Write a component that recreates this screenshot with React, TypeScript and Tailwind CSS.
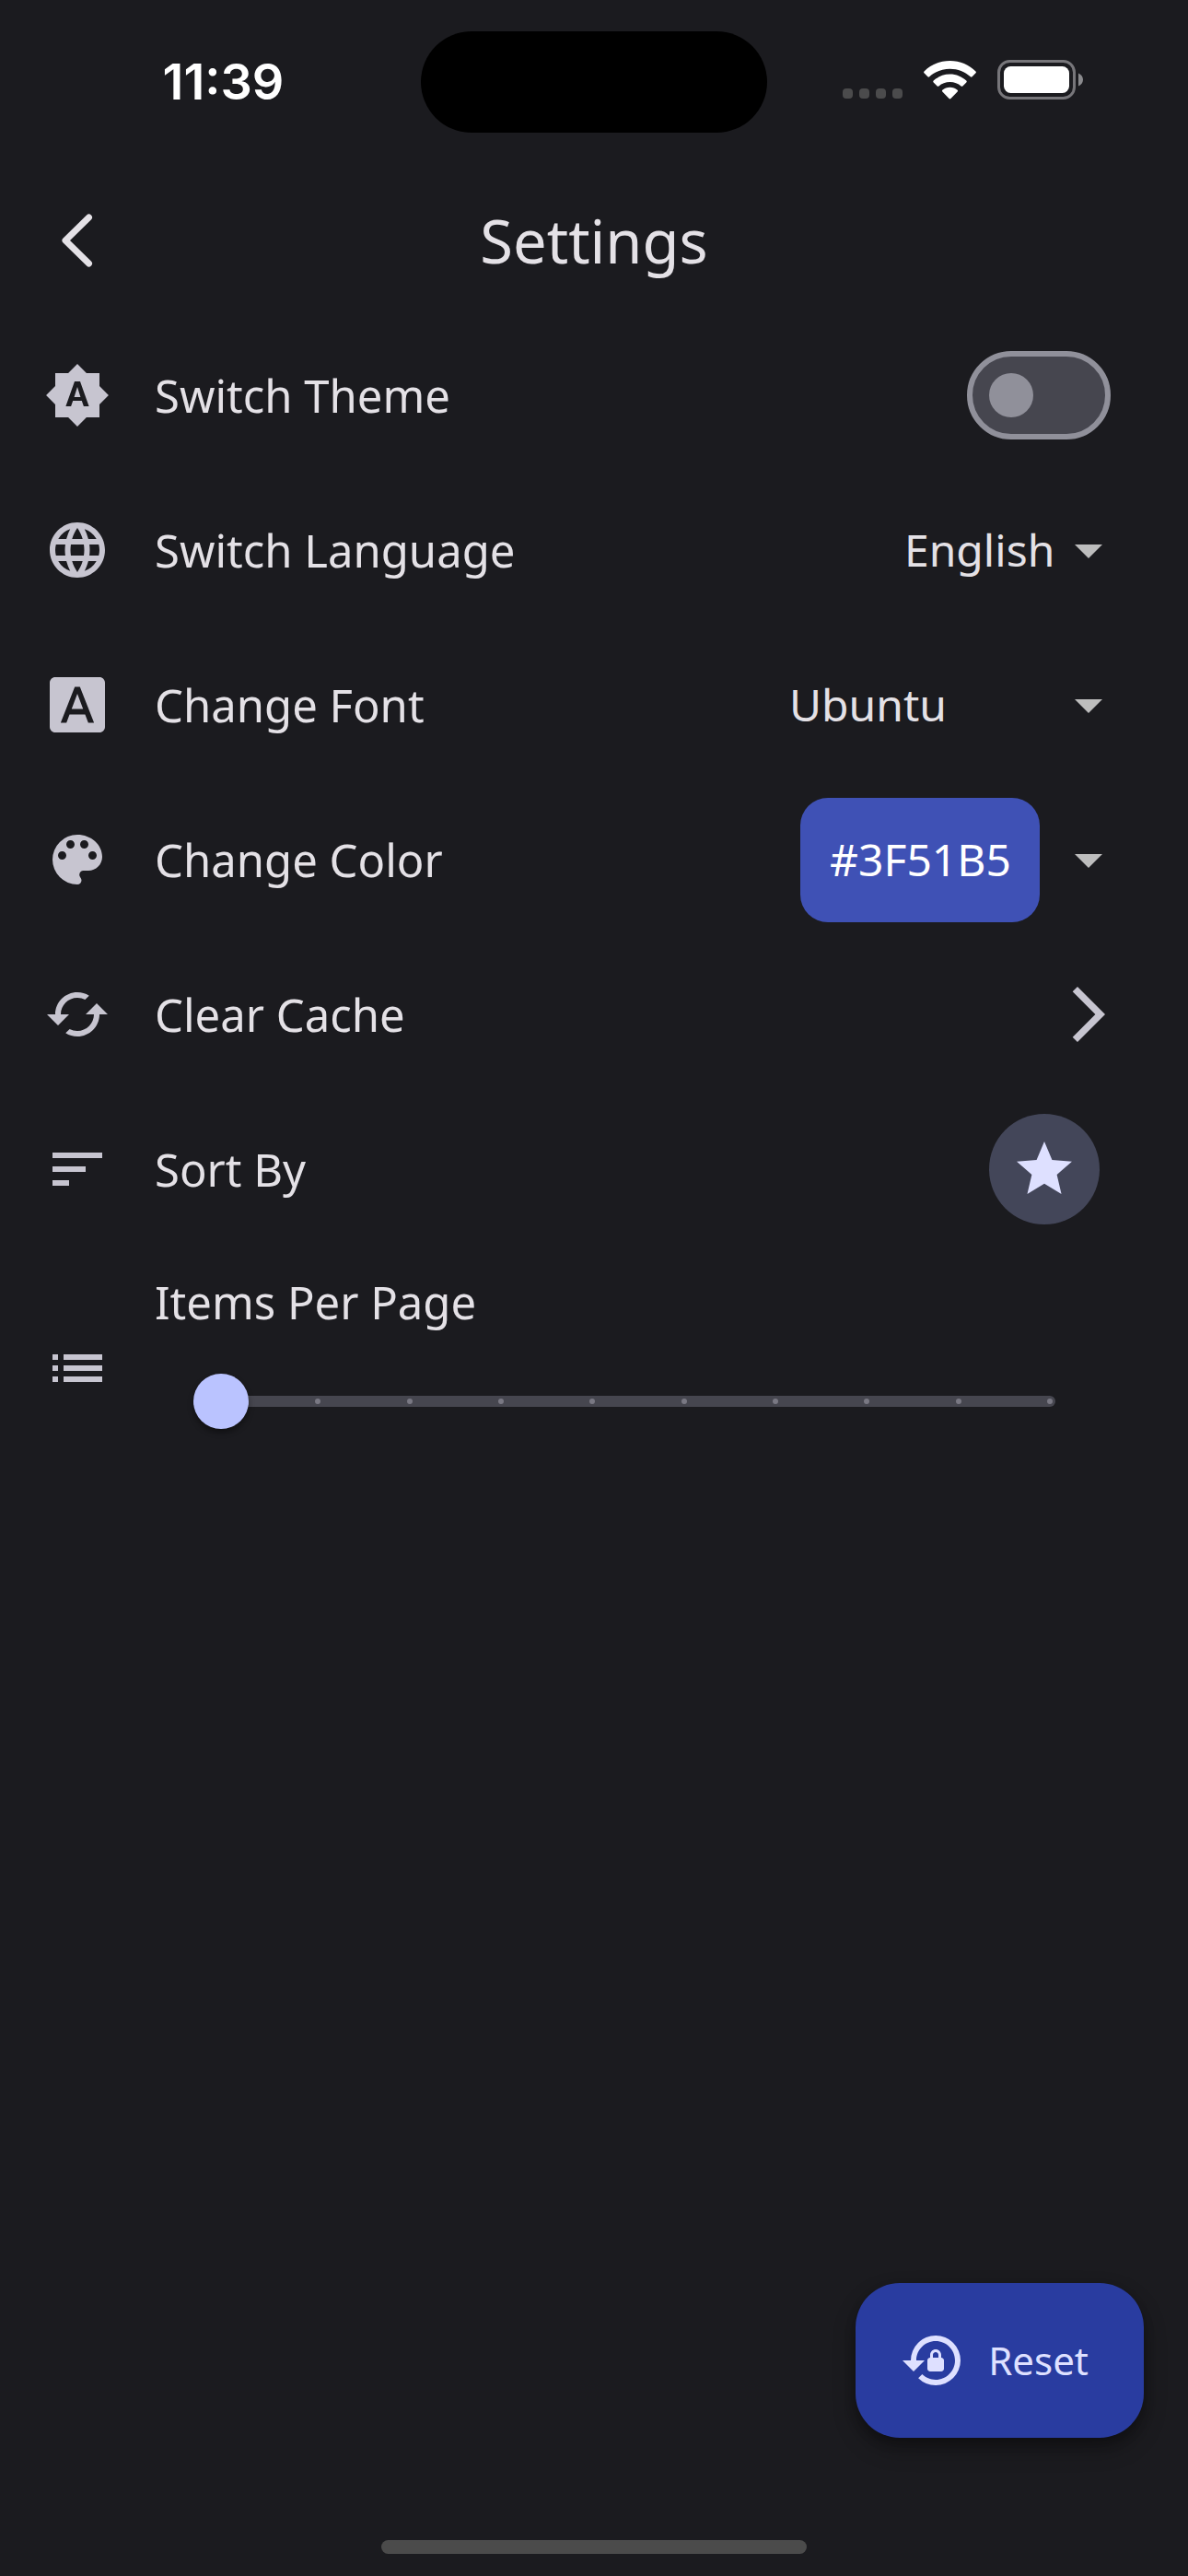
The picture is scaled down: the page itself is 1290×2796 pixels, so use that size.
import { useState } from "react";
import type { ReactNode } from "react";
import {
  MdArrowDropDown,
  MdArrowForwardIos,
  MdBrightnessAuto,
  MdCached,
  MdColorLens,
  MdFontDownload,
  MdLanguage,
  MdList,
  MdLockReset,
  MdSort,
  MdStar,
} from "react-icons/md";

const TICKS = [0, 1, 2, 3, 4, 5, 6, 7, 8, 9];

function StatusBar() {
  return (
    <div className="grid h-[177px] grid-cols-[1fr_376px_1fr] items-center">
      <div className="flex justify-center pl-7 font-['Inter',sans-serif] text-[54px] leading-none font-semibold text-white">
        11:39
      </div>
      <div className="h-[110px] rounded-full bg-black" />
      <div className="flex items-end justify-center pr-8 pb-1">
        <div className="mr-[23px] flex gap-[7px] pb-px">
          <span className="size-[11px] rounded-[4px] bg-[#4b4b4c]" />
          <span className="size-[11px] rounded-[4px] bg-[#4b4b4c]" />
          <span className="size-[11px] rounded-[4px] bg-[#4b4b4c]" />
          <span className="size-[11px] rounded-[4px] bg-[#4b4b4c]" />
        </div>
        <svg className="mr-[23px] h-[42px] w-[57px]" viewBox="0 0 57 42" fill="white" aria-hidden="true">
          <path d="M28.5 0C39.5 0 49.400 4.300 56.500 11.500Q57.300 12.400 56.500 13.300L52.600 17.300Q51.700 18.100 50.800 17.300C45 11.900 37.100 8.700 28.500 8.700C19.900 8.700 12 11.900 6.200 17.300Q5.300 18.100 4.400 17.300L.5 13.300Q-.3 12.400 .5 11.500C7.600 4.300 17.500 0 28.500 0Z" />
          <path d="M28.500 14.500C35.400 14.500 41.600 17.200 46.300 21.600Q47.200 22.500 46.300 23.400L42.300 27.400Q41.500 28.200 40.600 27.400C37.400 24.500 33.200 22.900 28.500 22.900C23.800 22.900 19.600 24.500 16.400 27.400Q15.500 28.200 14.700 27.400L10.700 23.400Q9.800 22.500 10.700 21.600C15.400 17.200 21.600 14.500 28.500 14.500Z" />
          <path d="M28.500 28.800C31.600 28.800 34.500 29.900 36.700 31.700Q37.600 32.500 36.700 33.400L29.400 41.100Q28.500 41.900 27.600 41.100L20.300 33.400Q19.400 32.500 20.300 31.700C22.500 29.900 25.400 28.800 28.500 28.800Z" />
        </svg>
        <svg className="h-[43px] w-[93px]" viewBox="0 0 93 43" aria-hidden="true">
          <rect x="1.500" y="1.500" width="82" height="40" rx="12" fill="none" stroke="#77767a" strokeWidth="3" />
          <rect x="7" y="7" width="71" height="29" rx="7.500" fill="white" />
          <path d="M88 14.500C91 15.700 93 18.400 93 21.500S91 27.300 88 28.500Z" fill="#8a8a8d" />
        </svg>
      </div>
    </div>
  );
}

function Row({ icon, label, htmlFor, children }: { icon: ReactNode; label: string; htmlFor: string; children: ReactNode }) {
  return (
    <div className="flex h-[168px] items-center">
      <span className="mr-12 text-[72px] text-[#c7c5d0]">{icon}</span>
      <label htmlFor={htmlFor} className="flex-1 text-[49px]">
        {label}
      </label>
      {children}
    </div>
  );
}

function Arrow() {
  return <MdArrowDropDown className="pointer-events-none size-[72px] text-[#bdbdbd]" aria-hidden="true" />;
}

export default function App() {
  const [light, setLight] = useState(false);
  const [items, setItems] = useState(0);

  return (
    <div className="flex min-h-screen flex-col bg-[#1b1b1f] font-['Noto_Sans',sans-serif] text-[48px] leading-[72px] text-[#e4e1e6]">
      <StatusBar />

      <header className="grid h-[168px] grid-cols-[1fr_auto_1fr] items-center px-12">
        <button type="button" aria-label="Back" className="size-[72px]">
          <svg viewBox="0 0 72 72" fill="none" stroke="currentColor" strokeWidth="7" strokeLinecap="round" strokeLinejoin="round" aria-hidden="true">
            <path d="M48.500 11L23 36L48.500 61" />
          </svg>
        </button>
        <h1 className="text-[65px] leading-[84px]">Settings</h1>
      </header>

      <main className="pr-[72px] pl-12">
        <Row icon={<MdBrightnessAuto />} label="Switch Theme" htmlFor="theme">
          <span className="mr-3 grid h-24 w-[156px] items-center">
            <input
              id="theme"
              type="checkbox"
              role="switch"
              checked={light}
              onChange={(e) => setLight(e.target.checked)}
              className="peer col-start-1 row-start-1 h-24 w-[156px] appearance-none rounded-full border-[6px] border-[#90909a] bg-[#46464f]"
            />
            <span className="pointer-events-none col-start-1 row-start-1 ml-6 size-12 rounded-full bg-[#90909a] peer-checked:ml-[84px]" />
          </span>
        </Row>

        <Row icon={<MdLanguage />} label="Switch Language" htmlFor="language">
          <select id="language" className="appearance-none bg-transparent">
            <option>English</option>
          </select>
          <Arrow />
        </Row>

        <Row icon={<MdFontDownload />} label="Change Font" htmlFor="font">
          <select id="font" className="w-[289px] appearance-none bg-transparent">
            <option>Ubuntu</option>
          </select>
          <Arrow />
        </Row>

        <Row icon={<MdColorLens />} label="Change Color" htmlFor="color">
          <select id="color" className="mr-[17px] h-[135px] w-[260px] appearance-none rounded-[30px] bg-[#3f51b5] px-8 text-white">
            <option>#3F51B5</option>
          </select>
          <Arrow />
        </Row>

        <Row icon={<MdCached />} label="Clear Cache" htmlFor="cache">
          <button id="cache" type="button" className="text-[72px] text-[#c7c5d0]">
            <MdArrowForwardIos />
          </button>
        </Row>

        <Row icon={<MdSort />} label="Sort By" htmlFor="sort">
          <button id="sort" type="button" className="mr-6 flex size-[120px] items-center justify-center rounded-full bg-[#434659] text-[72px] text-[#dee0ff]">
            <MdStar />
          </button>
        </Row>

        <div className="flex items-center py-6">
          <span className="mr-12 text-[72px] text-[#c7c5d0]">
            <MdList />
          </span>
          <div className="flex-1">
            <label htmlFor="items" className="block text-[49px]">
              Items Per Page
            </label>
            <div className="grid h-36 items-center px-[42px]">
              <div className="col-start-1 row-start-1 mx-[30px] flex h-3 items-center justify-between rounded-full bg-[#46464f] px-[3px]">
                {TICKS.map((t) => (
                  <span key={t} className="size-[6px] rounded-full bg-[#797883]" />
                ))}
              </div>
              <input
                id="items"
                type="range"
                min={0}
                max={9}
                value={items}
                onChange={(e) => setItems(Number(e.target.value))}
                className="col-start-1 row-start-1 h-[60px] w-full appearance-none bg-transparent [&::-webkit-slider-thumb]:size-[60px] [&::-webkit-slider-thumb]:appearance-none [&::-webkit-slider-thumb]:rounded-full [&::-webkit-slider-thumb]:bg-[#bac3ff] [&::-webkit-slider-thumb]:shadow-[0_4px_6px_rgba(0,0,0,0.4)]"
              />
            </div>
          </div>
        </div>
      </main>

      <button
        type="button"
        className="mt-auto mr-12 flex h-[168px] items-center gap-6 self-end rounded-[48px] bg-[#293ca0] pr-[60px] pl-12 text-[42px] text-[#dee0ff] shadow-[0_12px_24px_rgba(0,0,0,0.3),0_6px_12px_rgba(0,0,0,0.2)]"
      >
        <MdLockReset className="size-[72px]" aria-hidden="true" />
        Reset
      </button>

      <div className="mt-[111px] mb-6 h-[15px] w-[462px] self-center rounded-full bg-[#4b4b4b]" />
    </div>
  );
}
